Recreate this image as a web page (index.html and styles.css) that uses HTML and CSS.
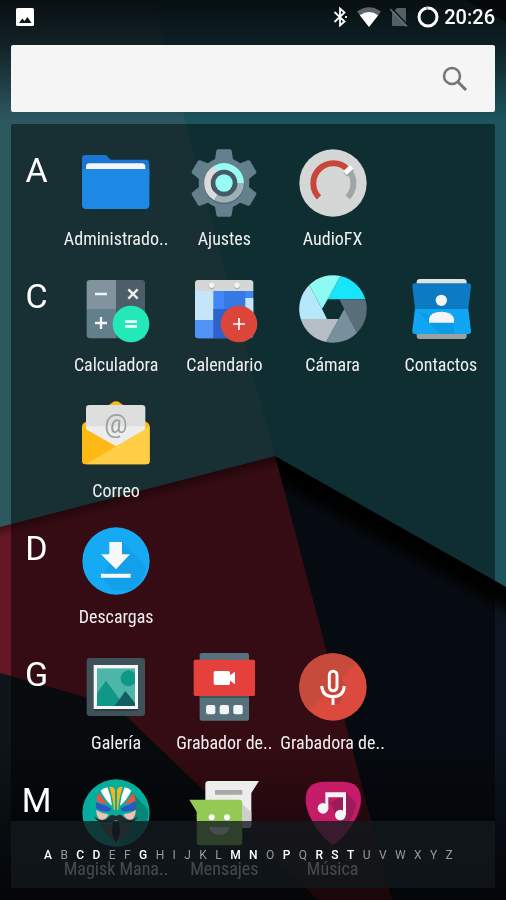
FILE: index.html
```html
<!DOCTYPE html>
<html lang="es">

<head>
    <meta charset="utf-8">
    <meta name="viewport" content="width=device-width, initial-scale=1">
    <title>Aplicaciones</title>
    <link rel="stylesheet" href="styles.css">
</head>

<body>
    <svg class="wallpaper" viewBox="0 0 506 900" preserveAspectRatio="none" aria-hidden="true">
        <defs>
            <linearGradient id="topShade" x1="0" y1="0" x2="0" y2="1">
                <stop offset="0" stop-color="#05090b" stop-opacity=".92" />
                <stop offset=".35" stop-color="#070d10" stop-opacity=".75" />
                <stop offset="1" stop-color="#070d10" stop-opacity="0" />
            </linearGradient>
            <linearGradient id="bottomShade" x1="0" y1="0" x2="0" y2="1">
                <stop offset="0" stop-color="#000" stop-opacity="0" />
                <stop offset="1" stop-color="#000" stop-opacity=".75" />
            </linearGradient>
            <linearGradient id="edgeShadow" gradientUnits="userSpaceOnUse" x1="390" y1="521" x2="376" y2="546">
                <stop offset="0" stop-color="#000" />
                <stop offset=".5" stop-color="#020304" />
                <stop offset="1" stop-color="#0c1520" />
            </linearGradient>
            <linearGradient id="redShadow" gradientUnits="userSpaceOnUse" x1="137" y1="491" x2="140" y2="503">
                <stop offset="0" stop-color="#3d0c16" />
                <stop offset="1" stop-color="#651725" />
            </linearGradient>
        </defs>
        <rect width="506" height="900" fill="#1c555c" />
        <path d="M0 0H153L275 456L0 528Z" fill="#2d5860" />
        <path d="M466 0H506V22Z" fill="#000" />
        <path d="M275 456L506 587V900H380Z" fill="url(#edgeShadow)" />
        <path d="M0 527L275 456L392 900H0Z" fill="url(#redShadow)" />
        <path d="M0 673L85 697Q112 702 127 717L318 900H0Z" fill="#0e151a" />
        <rect width="506" height="120" fill="url(#topShade)" />
        <rect y="740" width="506" height="160" fill="url(#bottomShade)" />
    </svg>

    <div class="screen">
        <header class="status">
            <svg class="status-icon" viewBox="0 0 18 18" aria-hidden="true">
                <path fill="#fff" fill-rule="evenodd" d="M1.500 0h15a1.500 1.500 0 0 1 1.500 1.500v15a1.500 1.500 0 0 1-1.500 1.500h-15A1.500 1.500 0 0 1 0 16.500v-15A1.500 1.500 0 0 1 1.500 0zM3 15h12.500l-4-6-3 4-2.200-2.500z" />
            </svg>
            <div class="status-right">
                <svg class="bluetooth" viewBox="0 0 14 20" fill="none" stroke="#fff" stroke-width="1.800" aria-hidden="true">
                    <path d="M1.500 5L11.500 14.500L7 18.500V1.500L11.500 5.500L1.500 15" />
                    <path d="M13 9v2" />
                </svg>
                <svg class="wifi" viewBox="0 0 24 20" aria-hidden="true">
                    <path fill="#fff" fill-opacity=".35" d="M0 4.500Q12-4 24 4.500L12 20Z" />
                    <path fill="#fff" d="M2.800 8.200Q12 2 21.200 8.200L12 20Z" />
                </svg>
                <svg class="sim" viewBox="0 0 18 20" aria-hidden="true">
                    <path fill="#536065" d="M7 1h8a1 1 0 0 1 1 1v16a1 1 0 0 1-1 1H3a1 1 0 0 1-1-1V6z" />
                    <path stroke="#0a1315" stroke-width="1.500" d="M1.500 1L18 18.500" />
                    <path stroke="#6a7477" stroke-width="1.500" d="M0 2L17 19.500" />
                </svg>
                <svg class="battery" viewBox="0 0 22 22" fill="none" stroke-width="3" aria-hidden="true">
                    <circle cx="11" cy="11" r="9" stroke="#fff" />
                    <path d="M10 0v4" stroke="#6a7477" stroke-width="1" />
                </svg>
                <time class="clock">20:26</time>
            </div>
        </header>

        <form class="search">
            <input type="search" class="search-input" aria-label="Buscar aplicaciones">
            <button type="button" class="search-button" aria-label="Buscar">
                <svg viewBox="0 0 26 26" fill="none" stroke="#757575" aria-hidden="true">
                    <circle cx="10" cy="10" r="8" stroke-width="2.500" />
                    <path d="M16 16L24 24" stroke-width="3" />
                </svg>
            </button>
        </form>

        <main class="drawer">
            <section class="group" id="A">
                <h2 class="letter">A</h2>
                <div class="apps">
                    <button class="app">
                        <svg class="icon" viewBox="0 0 204 204" aria-hidden="true">
                            <path fill="#1976d2" d="M10 18H72L86 32H192Q202 32 202 44V100H0V28Q0 18 10 18Z" />
                            <path fill="#f5f5f5" d="M22 43H180Q190 43 190 54V70H12V54Q12 43 22 43Z" />
                            <path fill="#1e88e5" d="M0 60H202V168Q202 180 190 180H12Q0 180 0 168Z" />
                        </svg>
                        <span class="label">Administrado..</span>
                    </button>
                    <button class="app">
                        <svg class="icon" viewBox="0 0 204 204" aria-hidden="true">
                            <g fill="#64808c">
                                <circle cx="102" cy="102" r="76" />
                                <path id="tooth" d="M84 1H120Q124 1 125 6L131 42H73L79 6Q80 1 84 1Z" />
                                <use href="#tooth" transform="rotate(60 102 102)" />
                                <use href="#tooth" transform="rotate(120 102 102)" />
                                <use href="#tooth" transform="rotate(180 102 102)" />
                                <use href="#tooth" transform="rotate(240 102 102)" />
                                <use href="#tooth" transform="rotate(300 102 102)" />
                            </g>
                            <circle cx="102" cy="105" r="60" fill="#4b646f" />
                            <circle cx="102" cy="102" r="40" fill="#455a64" />
                            <g fill="none" stroke-width="19">
                                <circle cx="102" cy="102" r="50" stroke="#9fb0b6" />
                                <path d="M77 145A50 50 0 0 1 77 59" stroke="#dcdcdc" />
                                <path d="M77 59A50 50 0 0 1 152 102" stroke="#98fbf4" />
                            </g>
                            <circle cx="102" cy="102" r="26" fill="#98fbf4" />
                        </svg>
                        <span class="label">Ajustes</span>
                    </button>
                    <button class="app">
                        <svg class="icon" viewBox="0 0 204 204" aria-hidden="true">
                            <circle cx="102" cy="102" r="101" fill="#d5d6d6" />
                            <g fill="none" stroke-width="18">
                                <path d="M146 61A60 60 0 0 1 146 145" stroke="#9da7a8" />
                                <path d="M60 145A60 60 0 1 1 146 61" stroke="#c8473a" />
                            </g>
                            <rect x="135" y="59" width="28" height="16" fill="#999" transform="rotate(-42 149 67)" />
                            <rect x="134" y="55" width="28" height="16" fill="#fff" transform="rotate(-42 148 63)" />
                        </svg>
                        <span class="label">AudioFX</span>
                    </button>
                </div>
            </section>

            <section class="group" id="C">
                <h2 class="letter">C</h2>
                <div class="apps">
                    <button class="app">
                        <svg class="icon" viewBox="0 0 204 204" aria-hidden="true">
                            <path fill="#81939c" d="M24 15H102V102H14V25Q14 15 24 15Z" />
                            <path fill="#4c5f68" d="M102 15H179Q189 15 189 25V190H102Z" />
                            <path fill="#647f8c" d="M14 102H102V190H24Q14 190 14 180Z" />
                            <g stroke="#f2f2f2" stroke-width="7">
                                <path d="M39 57H75M39 144H75M57 126V162" />
                                <path d="M139 43L167 71M167 43L139 71" />
                            </g>
                            <circle cx="147" cy="147" r="55" fill="#23e9b9" />
                            <path d="M129 140H165M129 154H165" stroke="#e9fff9" stroke-width="8" />
                        </svg>
                        <span class="label">Calculadora</span>
                    </button>
                    <button class="app">
                        <svg class="icon" viewBox="0 0 204 204" aria-hidden="true">
                            <path fill="#4285f4" d="M15 48H190V180Q190 190 180 190H25Q15 190 15 180Z" />
                            <path fill="#c5e5fb" d="M15 48H70V135H15Z" />
                            <path fill="#5293f7" d="M15 135H70V190H25Q15 190 15 180Z" />
                            <path fill="#2d63cb" d="M70 102H125V190H70Z" />
                            <path fill="#3779e2" d="M102 48H166V102H102Z" />
                            <path fill="#c5e5fb" d="M166 69H190V124H166Z" />
                            <path fill="#d5d6d6" d="M25 15H180Q190 15 190 25V48H15V25Q15 15 25 15Z" />
                            <circle cx="65" cy="34" r="9" fill="#b0b2b2" />
                            <circle cx="141" cy="34" r="9" fill="#b0b2b2" />
                            <circle cx="65" cy="31" r="8" fill="#f5f5f5" />
                            <circle cx="141" cy="31" r="8" fill="#f5f5f5" />
                            <circle cx="147" cy="147" r="55" fill="#db453a" />
                            <path d="M129 147H165M147 129V165" stroke="#fff" stroke-width="5" />
                        </svg>
                        <span class="label">Calendario</span>
                    </button>
                    <button class="app">
                        <svg class="icon" viewBox="0 0 204 204" aria-hidden="true">
                            <path fill="#18e4fb" d="M86 73L124 3A101 101 0 0 1 199 73Z" />
                            <path fill="#596e79" d="M121 73H199A101 101 0 0 1 174 173L136 102Z" />
                            <path fill="#78909c" d="M136 102L174 173A101 101 0 0 1 81 201L119 132Z" />
                            <path fill="#b4bec4" d="M119 132L81 201A101 101 0 0 1 5 132H84Z" />
                            <path fill="#b5e8fb" d="M84 132H5A101 101 0 0 1 31 30L69 102Z" />
                            <path fill="#8dfbf2" d="M69 102L31 30A101 101 0 0 1 124 3L86 73Z" />
                        </svg>
                        <span class="label">Cámara</span>
                    </button>
                    <button class="app">
                        <svg class="icon" viewBox="0 0 204 204" aria-hidden="true">
                            <rect x="29" y="12" width="150" height="90" rx="10" fill="#e0e1e1" />
                            <rect x="29" y="102" width="150" height="90" rx="10" fill="#9ba1a3" />
                            <path fill="#0c7bc4" d="M24 25H184Q193 25 192 34L184 102H24L16 34Q15 25 24 25Z" />
                            <path fill="#10a6f3" d="M24 102H184L192 168Q193 177 184 177H24Q15 177 16 168Z" />
                            <path fill="#0c9ce6" d="M34 110L66 143L100 177H141V143Z" />
                            <circle cx="103" cy="76" r="17" fill="#f5f5f5" />
                            <path fill="#f5f5f5" d="M66 143V131Q72 110 103 110T141 131V143Z" />
                        </svg>
                        <span class="label">Contactos</span>
                    </button>
                    <button class="app">
                        <svg class="icon" viewBox="0 0 204 204" aria-hidden="true">
                            <path fill="#ffb914" d="M0 78Q0 68 10 64L90 5Q102-3 114 5L194 64Q203 68 203 78V180Q203 190 193 190H10Q0 190 0 180Z" />
                            <path fill="#ffcd46" d="M203 76V180Q203 190 193 190H12Z" />
                            <path fill="#dedede" d="M22 12H180Q190 12 190 22V78H12V22Q12 12 22 12Z" />
                            <path fill="#ededed" d="M12 76H190V85L102 136L12 85Z" />
                            <text x="102" y="97" class="at-sign">@</text>
                        </svg>
                        <span class="label">Correo</span>
                    </button>
                </div>
            </section>

            <section class="group" id="D">
                <h2 class="letter">D</h2>
                <div class="apps">
                    <button class="app">
                        <svg class="icon" viewBox="0 0 204 204" aria-hidden="true">
                            <circle cx="102" cy="102" r="101" fill="#16aaf5" />
                            <path fill="#12a0ea" d="M120 45L193 118Q184 165 150 190H95L57 152Z" />
                            <path fill="#f8f8f8" d="M82 45H120V82H144L102 127L57 82H82ZM57 140H146V152H57Z" />
                        </svg>
                        <span class="label">Descargas</span>
                    </button>
                </div>
            </section>

            <section class="group" id="G">
                <h2 class="letter">G</h2>
                <div class="apps">
                    <button class="app">
                        <svg class="icon" viewBox="0 0 204 204" aria-hidden="true">
                            <rect x="14" y="15" width="175" height="174" rx="9" fill="#3f5159" />
                            <rect x="35" y="42" width="133" height="132" fill="#2d3c43" />
                            <rect x="35" y="36" width="133" height="132" fill="#f5f5f5" />
                            <rect x="45" y="46" width="114" height="113" fill="#4db6a9" />
                            <path fill="#0f9788" d="M159 62A24 24 0 1 0 159 90Z" />
                            <path fill="#0f9788" d="M45 121L72 83L128 159H45Z" />
                            <path fill="#105e5d" d="M130 114L159 150V159H98Z" />
                        </svg>
                        <span class="label">Galería</span>
                    </button>
                    <button class="app">
                        <svg class="icon" viewBox="0 0 204 204" aria-hidden="true">
                            <rect x="29" y="0" width="148" height="203" rx="6" fill="#56707c" />
                            <rect x="29" y="129" width="148" height="6" fill="#40555e" />
                            <rect x="11" y="20" width="184" height="109" rx="5" fill="#e6403c" />
                            <path fill="#fff" d="M76 54H115Q120 54 120 59V67L135 56V94L120 83V91Q120 96 115 96H76Q71 96 71 91V59Q71 54 76 54Z" />
                            <g fill="#f5f5f5">
                                <rect x="48" y="156" width="28" height="28" rx="6" />
                                <rect x="89" y="156" width="28" height="28" rx="6" />
                                <rect x="130" y="156" width="28" height="28" rx="6" />
                            </g>
                        </svg>
                        <span class="label">Grabador de..</span>
                    </button>
                    <button class="app">
                        <svg class="icon" viewBox="0 0 204 204" aria-hidden="true">
                            <circle cx="102" cy="102" r="101" fill="#dc4a3e" />
                            <path fill="#c64b3d" d="M30 173A101 101 0 0 1 173 30Z" />
                            <path fill="#c8433a" d="M120 60L140 100L124 150L102 156L76 128Z" />
                            <g fill="none" stroke="#fafafa" stroke-width="9">
                                <rect x="91" y="55" width="23" height="58" rx="11" />
                                <path d="M68 99Q71 131 102 131T136 99M102 131V156" />
                            </g>
                        </svg>
                        <span class="label">Grabadora de..</span>
                    </button>
                </div>
            </section>

            <section class="group" id="M">
                <h2 class="letter">M</h2>
                <div class="apps">
                    <button class="app">
                        <svg class="icon" viewBox="0 0 204 204" aria-hidden="true">
                            <circle cx="102" cy="102" r="101" fill="#05ae9c" />
                            <path fill="#078577" d="M150 40L196 90Q206 140 165 180L120 200L100 170Z" />
                            <path fill="#05ae9c" d="M56 60H148V104L102 128L56 104Z" />
                            <g id="halfMask">
                                <path fill="#f7b51b" d="M82 24Q94 20 99 32V92H95Q95 66 82 24Z" />
                                <path fill="#fff" d="M56 35Q64 27 76 25Q88 52 90 80Q70 64 56 35Z" />
                                <path fill="#e85446" d="M51 42Q62 62 78 76Q60 76 44 66Q44 50 51 42Z" />
                                <path fill="#2c55c8" d="M42 70Q62 76 88 88L84 97Q60 100 42 88Z" />
                                <path fill="#f3c0b4" d="M42 93Q60 104 80 106L72 118Q62 124 52 122Q43 110 42 93Z" />
                                <path fill="#5b6266" d="M58 134H90L98 186Q64 164 58 134Z" />
                                <path fill="#24292c" d="M102 112Q90 102 80 114Q64 134 36 112Q46 132 66 130Q90 130 102 122Z" />
                            </g>
                            <use href="#halfMask" transform="matrix(-1 0 0 1 204 0)" />
                            <path fill="#111517" d="M92 128H112L114 164L102 192L90 164Z" />
                        </svg>
                        <span class="label">Magisk Mana..</span>
                    </button>
                    <button class="app">
                        <svg class="icon" viewBox="0 0 204 204" aria-hidden="true">
                            <path fill="#ededed" d="M56 6H207L184 42V137Q184 147 174 147H56Q46 147 46 137V16Q46 6 56 6Z" />
                            <path fill="#cfcfcf" d="M157 76L184 100V137Q184 147 174 147H157Z" />
                            <path fill="#a7a9a9" d="M75 33H157V47H75Z" />
                            <path fill="#94c956" d="M-2 62H147Q157 62 157 72V189Q157 199 147 199H30Q20 199 20 189V98Z" />
                            <circle cx="65" cy="115" r="9" fill="#fff" />
                            <circle cx="111" cy="115" r="9" fill="#fff" />
                            <path fill="#fff" d="M57 144H120Q112 168 88 168T57 144Z" />
                        </svg>
                        <span class="label">Mensajes</span>
                    </button>
                    <button class="app">
                        <svg class="icon" viewBox="0 0 204 204" aria-hidden="true">
                            <path fill="#c51b68" d="M102 198C70 180 20 112 20 62Q20 8 76 8H130Q186 8 186 62C186 112 134 180 102 198Z" />
                            <path fill="#9c1c58" d="M141 40L170 70Q176 90 140 146L116 120L88 55V92L60 100Z" />
                            <path fill="#f5f5f5" d="M79 40H141V108H132V55H88V88H79Z" />
                            <circle cx="72" cy="88" r="16" fill="#f5f5f5" />
                            <circle cx="124" cy="108" r="16" fill="#f5f5f5" />
                        </svg>
                        <span class="label">Música</span>
                    </button>
                </div>
            </section>

            <!-- letters with installed apps are highlighted -->
            <nav class="index">
                <a href="#A" class="on">A</a>
                <a href="#B">B</a>
                <a href="#C" class="on">C</a>
                <a href="#D" class="on">D</a>
                <a href="#E">E</a>
                <a href="#F">F</a>
                <a href="#G" class="on">G</a>
                <a href="#H">H</a>
                <a href="#I">I</a>
                <a href="#J">J</a>
                <a href="#K">K</a>
                <a href="#L">L</a>
                <a href="#M" class="on">M</a>
                <a href="#N" class="on">N</a>
                <a href="#O">O</a>
                <a href="#P" class="on">P</a>
                <a href="#Q">Q</a>
                <a href="#R" class="on">R</a>
                <a href="#S" class="on">S</a>
                <a href="#T" class="on">T</a>
                <a href="#U">U</a>
                <a href="#V">V</a>
                <a href="#W">W</a>
                <a href="#X">X</a>
                <a href="#Y">Y</a>
                <a href="#Z">Z</a>
            </nav>
        </main>
    </div>
</body>

</html>
```

FILE: styles.css
```css
* {
    box-sizing: border-box;
}

body {
    margin: 0;
    background-color: #0e151a;
    color: #fff;
    font-family: Roboto, "Liberation Sans", sans-serif;
}

button {
    margin: 0;
    padding: 0;
    border: none;
    background: none;
    color: inherit;
    font-family: inherit;
    cursor: pointer;
}

.wallpaper {
    position: fixed;
    top: 0;
    left: 0;
    width: 100%;
    height: 100%;
}

.screen {
    position: relative;
    display: flex;
    flex-direction: column;
    height: 100vh;
    padding: 0 11px 12px;
}

/* status bar */
.status {
    display: flex;
    justify-content: space-between;
    align-items: center;
    height: 34px;
    margin-bottom: 11px;
    padding-left: 5px;
}

.status-icon {
    width: 18px;
    height: 18px;
}

.status-right {
    display: flex;
    align-items: center;
}

.bluetooth {
    width: 14px;
    height: 20px;
    margin-right: 10px;
}

.wifi {
    width: 24px;
    height: 20px;
    margin-right: 9px;
}

.sim {
    width: 18px;
    height: 20px;
    margin-right: 9px;
}

.battery {
    width: 22px;
    height: 22px;
    margin-right: 5px;
}

.clock {
    font-size: 20px;
    line-height: 24px;
    font-weight: 500;
}

/* search box */
.search {
    display: flex;
    align-items: center;
    flex-shrink: 0;
    height: 67px;
    margin-bottom: 12px;
    padding: 0 27px 0 16px;
    border-radius: 2px;
    background-color: #f5f5f5;
}

.search-input {
    flex: 1;
    min-width: 0;
    height: 40px;
    border: none;
    outline: none;
    background: none;
    color: #333;
    font-family: inherit;
    font-size: 18px;
}

.search-button svg {
    display: block;
    width: 26px;
    height: 26px;
}

/* app drawer */
.drawer {
    position: relative;
    flex: 1;
    min-height: 0;
    overflow: hidden;
    padding-top: 25px;
    border-radius: 2px;
    background-color: rgba(0, 0, 0, 0.46);
}

.group {
    display: flex;
}

.letter {
    width: 51px;
    margin: 0;
    padding-top: 1px;
    font-size: 34px;
    line-height: 40px;
    font-weight: 400;
    text-align: center;
}

.apps {
    flex: 1;
    display: grid;
    grid-template-columns: repeat(4, 1fr);
}

.app {
    display: flex;
    flex-direction: column;
    align-items: center;
    gap: 11px;
    padding-bottom: 25px;
}

.icon {
    width: 68px;
    height: 68px;
    overflow: visible;
}

.label {
    font-family: "Roboto Condensed", Roboto, "Liberation Sans Narrow", sans-serif;
    font-size: 18px;
    line-height: 22px;
    color: #f0f0f0;
    white-space: nowrap;
}

.at-sign {
    font-family: Roboto, sans-serif;
    font-size: 78px;
    text-anchor: middle;
    fill: #9a9f9f;
}

/* A-Z index over the bottom of the drawer */
.index {
    position: absolute;
    left: 0;
    right: 0;
    bottom: 0;
    display: flex;
    justify-content: space-between;
    align-items: center;
    height: 67px;
    padding: 0 42px 0 33px;
    background-color: rgba(19, 25, 29, 0.78);
}

.index a {
    color: #999;
    font-size: 12px;
    line-height: 16px;
    text-decoration: none;
}

.index .on {
    color: #fff;
    font-weight: 500;
}
```
